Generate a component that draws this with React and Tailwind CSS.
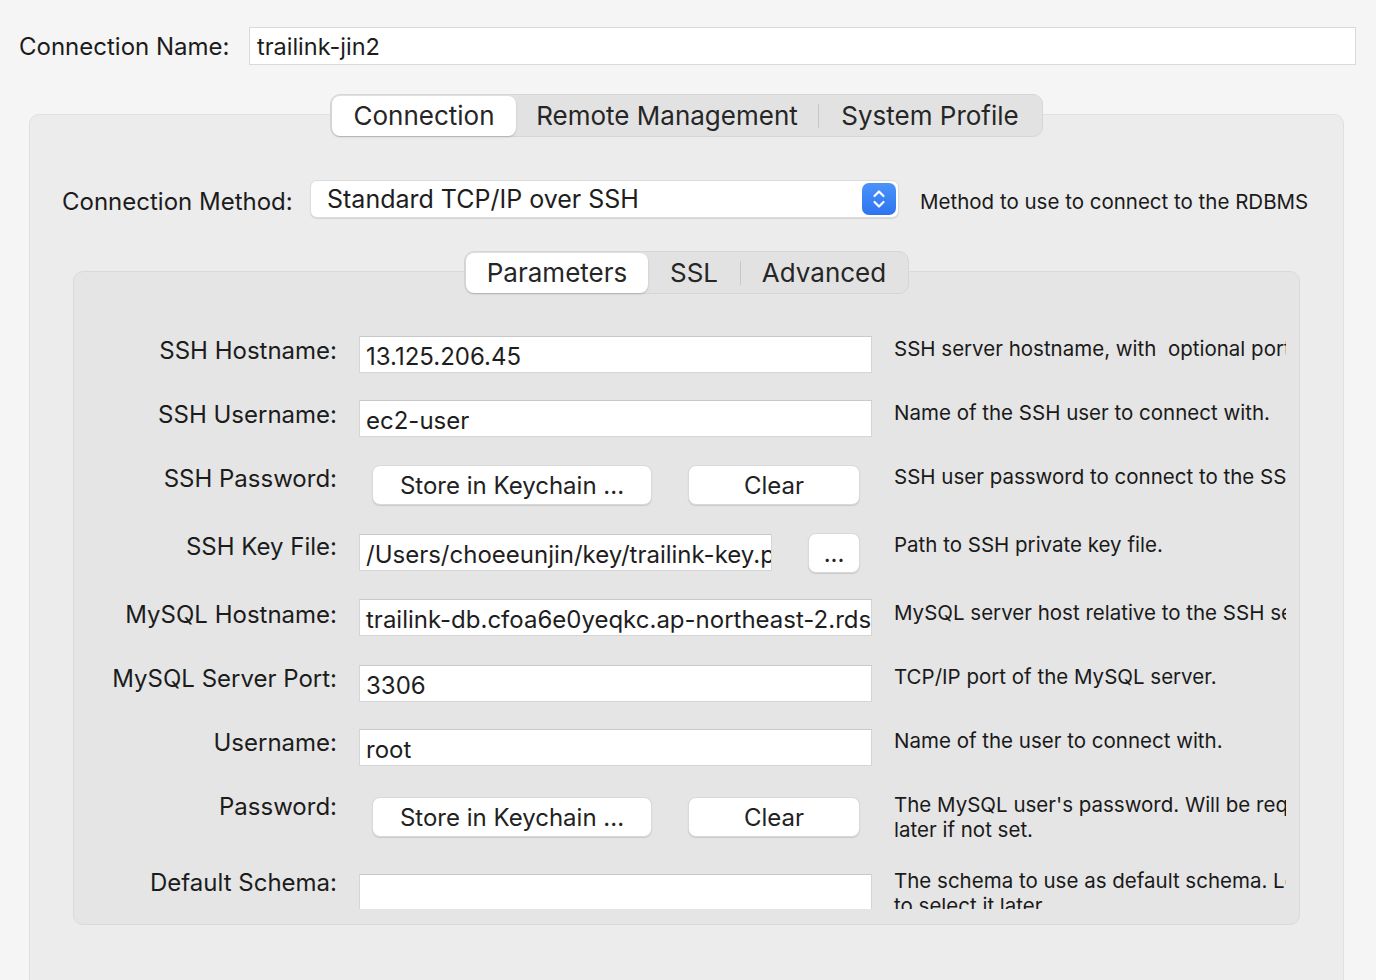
import React from 'react';

const font = { fontFamily: 'Inter, "Noto Sans", sans-serif' };

const TextBox = ({ value, className = '' }) => (
    <div className={`h-[37px] bg-white border border-[#d5d5d5] border-t-[#c9c9c9] pl-[6px] pt-[2px] text-[24px] leading-[35px] text-[#1e1e1e] whitespace-nowrap overflow-hidden ${className}`}>
        {value}
    </div>
);

const Button = ({ children, className = '' }) => (
    <div className={`h-[40px] bg-white rounded-[8px] border border-[#d9d9d9] shadow-[0_1px_1px_rgba(0,0,0,0.12)] text-[24px] leading-[39px] text-center text-[#222] ${className}`}>
        {children}
    </div>
);

const Segmented = ({ tabs }) => (
    <div className="flex h-[43px] bg-[#e2e2e2] border border-[#d6d6d6] rounded-[10px] p-[1px]">
        {tabs.map((t, i) => (
            <div key={t.label} className="flex items-center">
                {i > 1 && <div className="w-px h-[24px] bg-[#c8c8c8]" />}
                <div
                    className={`h-[40px] flex items-center justify-center text-[26px] leading-[32px] text-[#262626] ${t.w} ${i === 0 ? 'bg-white rounded-[8px] shadow-[0_1px_2px_rgba(0,0,0,0.2)]' : ''}`}
                >
                    {t.label}
                </div>
            </div>
        ))}
    </div>
);

const rows = [
    { label: 'SSH Hostname:', h: 'h-[64px]', mt: 'mt-[1px]', control: <TextBox value="13.125.206.45" />, help: 'SSH server hostname, with  optional port number.' },
    { label: 'SSH Username:', h: 'h-[64px]', mt: 'mt-[1px]', control: <TextBox value="ec2-user" />, help: 'Name of the SSH user to connect with.' },
    {
        label: 'SSH Password:', h: 'h-[68px]', mt: 'mt-[2px]',
        control: (
            <div className="flex">
                <Button className="ml-[13px] w-[280px]">Store in Keychain ...</Button>
                <Button className="ml-[36px] w-[172px]">Clear</Button>
            </div>
        ),
        help: 'SSH user password to connect to the SSH tunnel.'
    },
    {
        label: 'SSH Key File:', h: 'h-[68px]', mt: 'mt-[2px]',
        control: (
            <div className="flex items-start">
                <TextBox value="/Users/choeeunjin/key/trailink-key.pem" className="w-[413px] mt-[1px]" />
                <Button className="ml-[36px] w-[52px] text-[20px] leading-[34px]">...</Button>
            </div>
        ),
        help: 'Path to SSH private key file.'
    },
    { label: 'MySQL Hostname:', h: 'h-[64px]', mt: 'mt-0', control: <TextBox value="trailink-db.cfoa6e0yeqkc.ap-northeast-2.rds.amazonaws.com" />, help: 'MySQL server host relative to the SSH server.' },
    { label: 'MySQL Server Port:', h: 'h-[64px]', mt: 'mt-[2px]', control: <TextBox value="3306" />, help: 'TCP/IP port of the MySQL server.' },
    { label: 'Username:', h: 'h-[64px]', mt: 'mt-[2px]', control: <TextBox value="root" />, help: 'Name of the user to connect with.' },
    {
        label: 'Password:', h: 'h-[76px]', mt: 'mt-[6px]',
        control: (
            <div className="flex">
                <Button className="ml-[13px] w-[280px]">Store in Keychain ...</Button>
                <Button className="ml-[36px] w-[172px]">Clear</Button>
            </div>
        ),
        help: ["The MySQL user's password. Will be requested", 'later if not set.']
    },
    { label: 'Default Schema:', h: 'h-[80px]', mt: 'mt-[7px]', control: <TextBox value="" className="h-[60px]" />, help: ['The schema to use as default schema. Leave blank', 'to select it later.'] },
];

const App = () => {
    return (
        <div style={font} className="w-[1376px] h-[980px] overflow-hidden bg-[#f5f5f5] text-[#1c1c1c]">
            {/* Connection name */}
            <div className="flex items-start pt-[27px] pl-[19px] pr-[20px] h-[65px]">
                <div className="w-[230px] text-[24px] leading-[30px] mt-[5px]">Connection Name:</div>
                <div className="flex-1 h-[38px] bg-white border border-[#dadada] pl-[7px] pt-[2px] text-[23.5px] leading-[34px]">trailink-jin2</div>
            </div>

            {/* Outer panel */}
            <div className="mt-[49px] ml-[29px] w-[1315px] h-[900px] bg-[#ececec] border border-[#e0e0e0] rounded-[10px]">
                <div className="flex justify-center -mt-[21px]">
                    <Segmented tabs={[
                        { label: 'Connection', w: 'w-[184px]' },
                        { label: 'Remote Management', w: 'w-[302px]' },
                        { label: 'System Profile', w: 'w-[222px]' },
                    ]} />
                </div>

                <div className="flex items-start mt-[43px] pl-[32px] h-[38px]">
                    <div className="w-[248px] text-[24px] leading-[30px] mt-[7px]">Connection Method:</div>
                    <div className="w-[589px] h-[38px] bg-white rounded-[7px] border border-[#dcdcdc] shadow-[0_1px_1px_rgba(0,0,0,0.1)] flex items-center justify-between pl-[16px] pr-[2px]">
                        <span className="text-[25px] leading-[30px] text-[#1e1e1e]">Standard TCP/IP over SSH</span>
                        <div className="w-[34px] h-[32px] rounded-[7px] bg-gradient-to-b from-[#4b93fa] to-[#2d74f0] flex items-center justify-center">
                            <svg width="14" height="22" viewBox="0 0 14 22" fill="none" stroke="white" strokeWidth="2.2" strokeLinecap="round" strokeLinejoin="round">
                                <path d="M2.5 8 L7 3.5 L11.5 8" />
                                <path d="M2.5 14 L7 18.5 L11.5 14" />
                            </svg>
                        </div>
                    </div>
                    <div className="ml-[21px] text-[20.5px] leading-[25px] text-[#1a1a1a] mt-[9px]">Method to use to connect to the RDBMS</div>
                </div>

                {/* Inner panel */}
                <div className="mt-[53px] mx-[43px] h-[654px] bg-[#e5e5e5] border border-[#dadada] rounded-[10px]">
                    <div className="flex justify-center -mt-[21px]">
                        <Segmented tabs={[
                            { label: 'Parameters', w: 'w-[182px]' },
                            { label: 'SSL', w: 'w-[92px]' },
                            { label: 'Advanced', w: 'w-[166px]' },
                        ]} />
                    </div>

                    <div className="w-[1212px] h-[615px] overflow-hidden pt-[41px]">
                        {rows.map((r) => (
                            <div key={r.label} className={`flex items-start ${r.h}`}>
                                <div className="w-[263px] shrink-0 text-right text-[24px] leading-[30px] mt-[1px]">{r.label}</div>
                                <div className={`w-[513px] shrink-0 ml-[22px] ${r.mt}`}>{r.control}</div>
                                <div className="ml-[22px] mt-[1px] shrink-0 whitespace-pre text-[20.5px] leading-[25px] text-[#1a1a1a]">
                                    {Array.isArray(r.help)
                                        ? r.help.map((line) => <div key={line}>{line}</div>)
                                        : r.help}
                                </div>
                            </div>
                        ))}
                    </div>
                </div>
            </div>
        </div>
    );
};

export default App;
